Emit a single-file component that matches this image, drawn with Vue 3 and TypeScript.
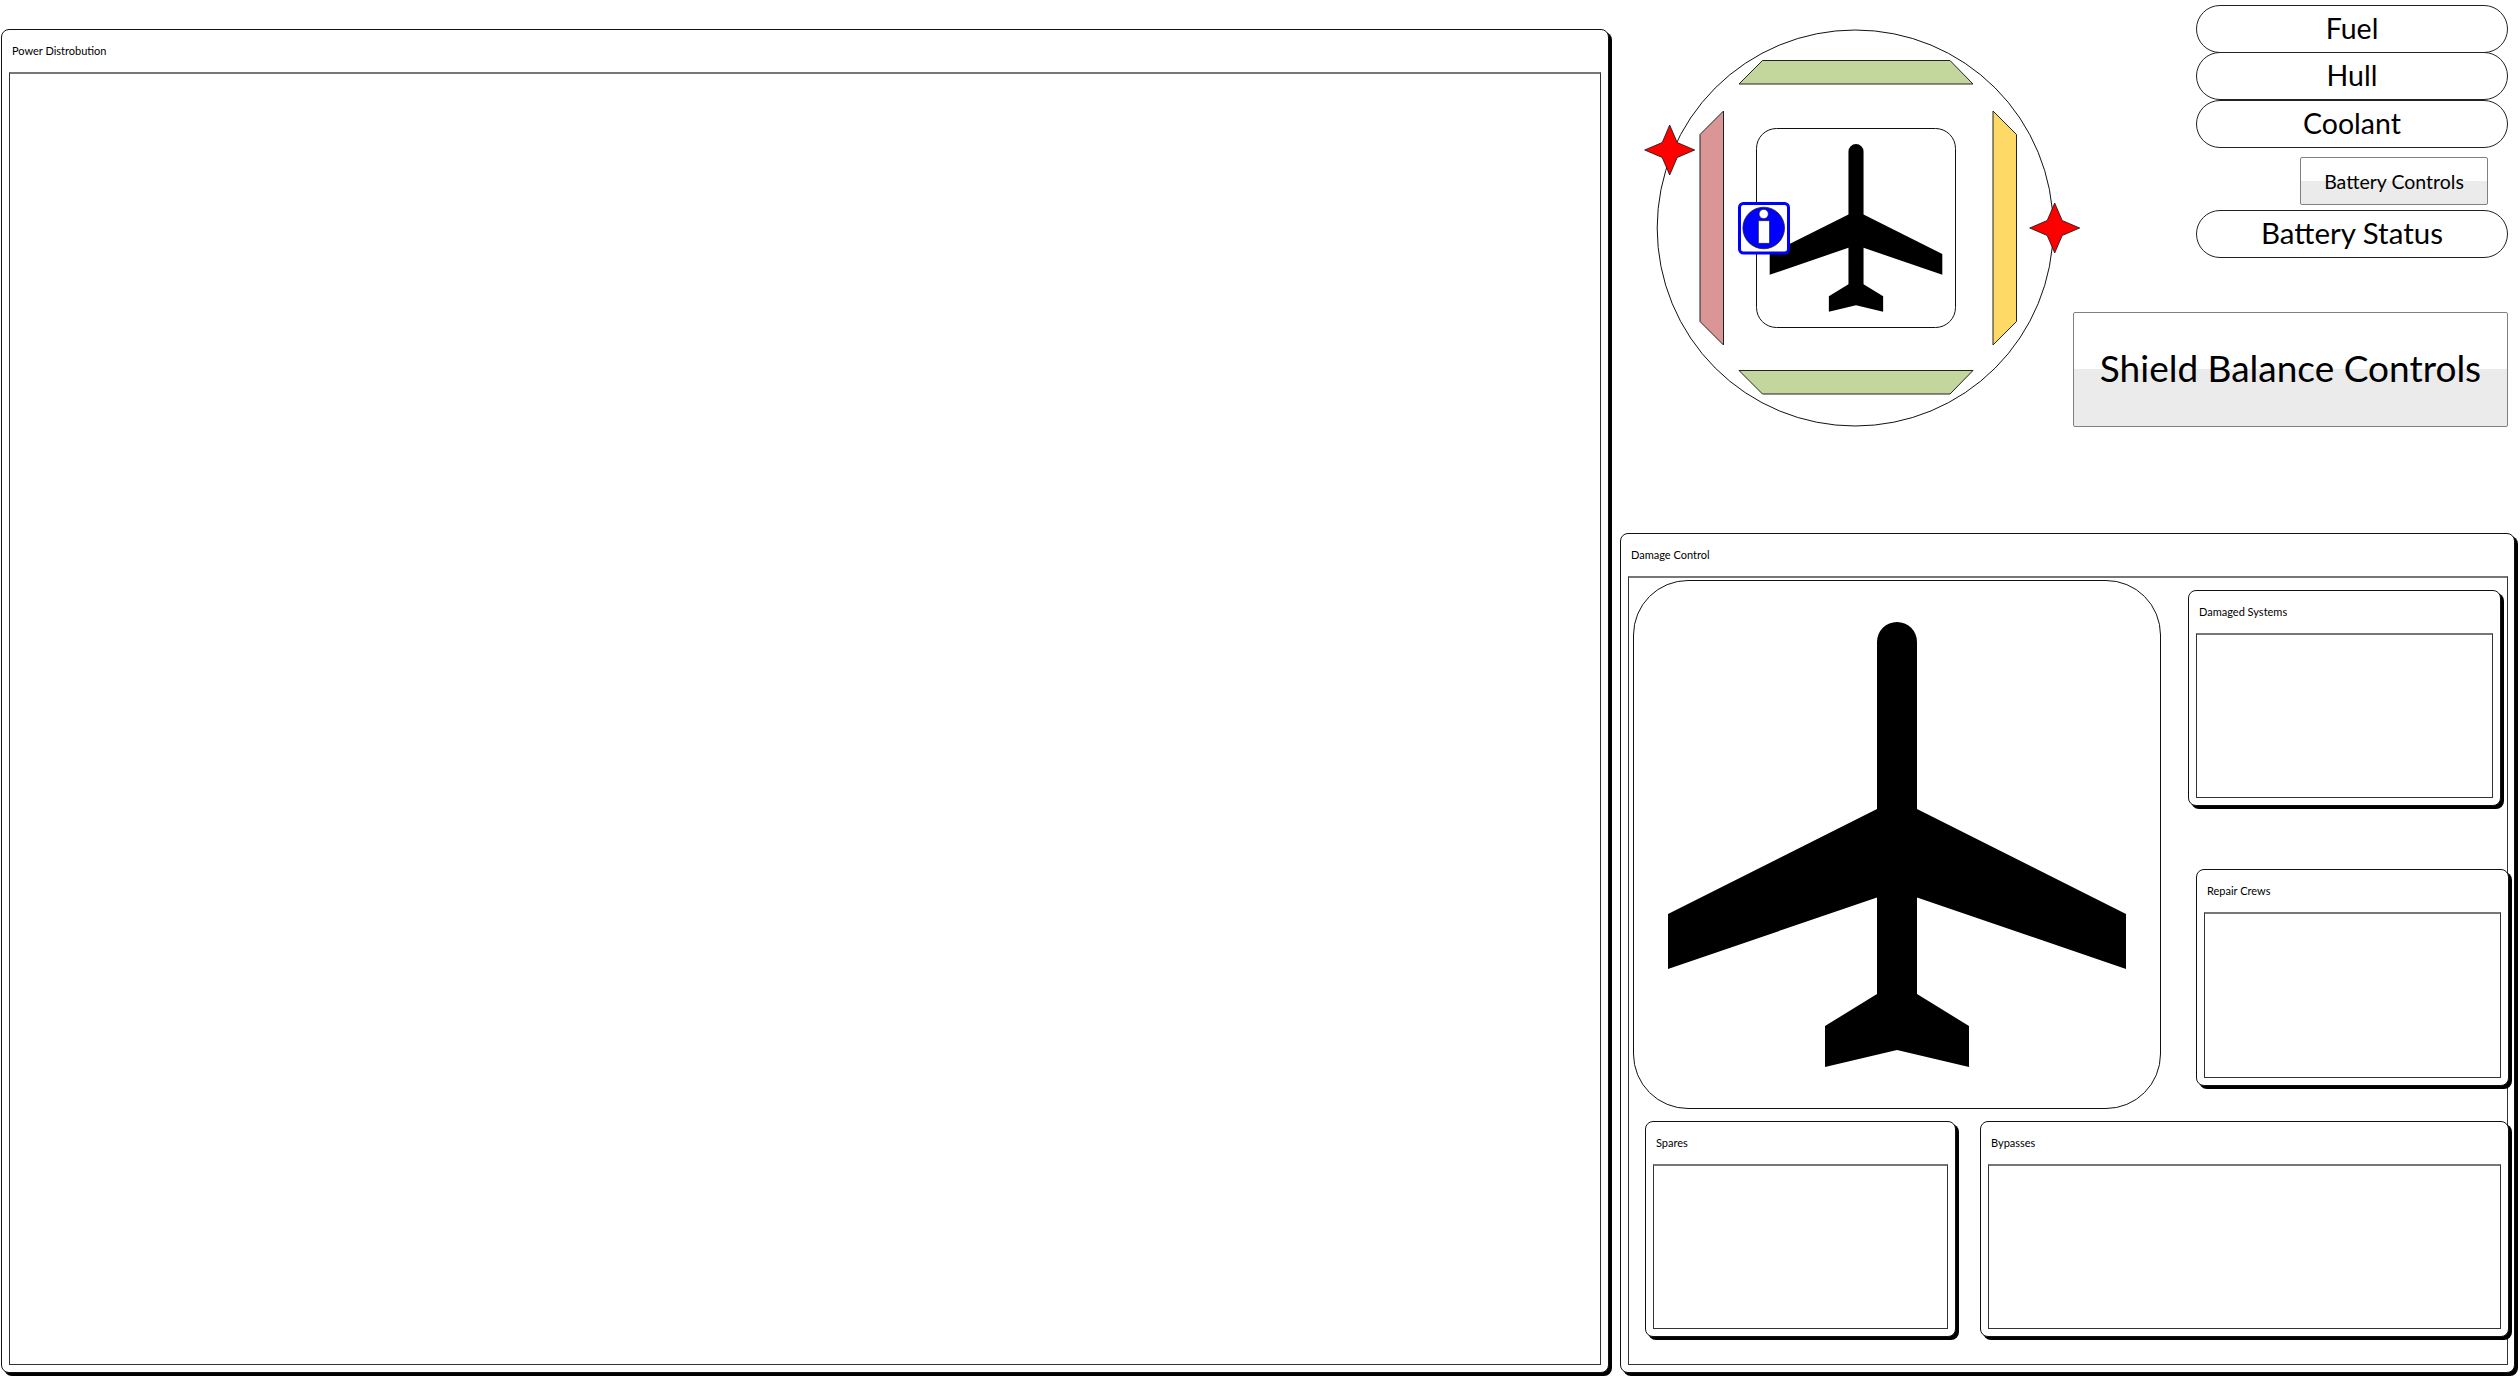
<script setup lang="ts">
const planePath =
    'M244 61 A20 20 0 0 1 284 61 V228 L493 333 V388 L284 316.5 V413 L336 445 V486 L264 469 L192 486 V445 L244 413 V316.5 L35 388 V333 L244 228 Z';

const starPoints = '0,-25 7.5,-7.5 25,0 7.5,7.5 0,25 -7.5,7.5 -25,0 -7.5,-7.5';

const shields = [
    { id: 'fore', points: '1762.5,60.5 1950,60.5 1973,84 1739,84', fill: '#c3d69b' },
    { id: 'aft', points: '1739,370.5 1973,370.5 1950,394 1762.5,394', fill: '#c3d69b' },
    { id: 'port', points: '1723.5,111 1723.5,345 1700,321.5 1700,134.5', fill: '#d99694' },
    { id: 'starboard', points: '1993,111 2016.5,134.5 2016.5,321.5 1993,345', fill: '#ffd966' },
];
</script>

<template>
    <div class="page">
        <section class="panel power">
            <div class="panel-title">Power Distrobution</div>
            <div class="panel-list" />
        </section>

        <div class="right-col">
            <div class="top-row">
                <svg class="ship-status" viewBox="1620 0 453 533">
                    <circle cx="1855.2" cy="228" r="198" fill="#fff" stroke="#111" />
                    <polygon
                        v-for="shield in shields"
                        :key="shield.id"
                        :points="shield.points"
                        :fill="shield.fill"
                        stroke="#222"
                    />
                    <rect x="1756.5" y="128.5" width="199" height="199" rx="20" fill="#fff" stroke="#111" />
                    <path :d="planePath" transform="translate(1756.5 128.5) scale(0.3769)" fill="#000" />

                    <polygon :points="starPoints" transform="translate(1669.7 150)" fill="#f00" stroke="#111" stroke-width="0.8" />
                    <polygon :points="starPoints" transform="translate(2054.7 228)" fill="#f00" stroke="#111" stroke-width="0.8" />

                    <rect x="1739.5" y="203.5" width="49" height="49.5" rx="4" fill="#fff" stroke="#00f" stroke-width="3" />
                    <circle cx="1763.7" cy="228" r="20.8" fill="#00f" stroke="#222" stroke-width="0.8" />
                    <circle cx="1763.7" cy="214" r="4.6" fill="#fff" stroke="#222" stroke-width="0.6" />
                    <rect x="1758.4" y="220.8" width="11" height="22.4" fill="#fff" stroke="#222" stroke-width="0.6" />
                </svg>

                <div class="controls">
                    <div class="pill">Fuel</div>
                    <div class="pill hull">Hull</div>
                    <div class="pill">Coolant</div>
                    <div class="button battery-controls">Battery Controls</div>
                    <div class="pill battery-status">Battery Status</div>
                    <div class="button shield-controls">Shield Balance Controls</div>
                </div>
            </div>

            <section class="panel damage">
                <div class="panel-title">Damage Control</div>
                <div class="panel-list damage-list">
                    <div class="damage-upper">
                        <div class="plane-box">
                            <svg class="plane-big" viewBox="0 0 528 528">
                                <path :d="planePath" fill="#000" />
                            </svg>
                        </div>
                        <div class="damage-side">
                            <section class="panel damaged-systems">
                                <div class="panel-title">Damaged Systems</div>
                                <div class="panel-list" />
                            </section>
                            <section class="panel repair-crews">
                                <div class="panel-title">Repair Crews</div>
                                <div class="panel-list" />
                            </section>
                        </div>
                    </div>
                    <div class="damage-lower">
                        <section class="panel spares">
                            <div class="panel-title">Spares</div>
                            <div class="panel-list" />
                        </section>
                        <section class="panel bypasses">
                            <div class="panel-title">Bypasses</div>
                            <div class="panel-list" />
                        </section>
                    </div>
                </div>
            </section>
        </div>
    </div>
</template>

<style>
html,
body {
    margin: 0;
    background: #fff;
}
</style>

<style scoped>
.page {
    display: flex;
    width: 2520px;
    height: 1377px;
    padding-left: 1px;
    box-sizing: border-box;
    overflow: hidden;
    font-family: Lato, "Open Sans", sans-serif;
    color: #000;
    background: #fff;
}

.panel {
    display: flex;
    flex-direction: column;
    box-sizing: border-box;
    padding: 0 7px 7px;
    background: #fff;
    border: 1px solid #111;
    border-radius: 8px;
    box-shadow: 3px 3px 0 #000;
}

.panel-title {
    flex: none;
    height: 42px;
    padding: 0 3px;
    font-size: 11px;
    line-height: 41px;
}

.panel-list {
    flex: 1;
    min-height: 0;
    box-sizing: border-box;
    background: #fff;
    border: 1px solid #333;
    border-top: 2px solid #777;
}

.power {
    flex: none;
    width: 1608px;
    height: 1344px;
    margin: 29px 11px 0 0;
}

.right-col {
    display: flex;
    flex: none;
    flex-direction: column;
    width: 895px;
}

.top-row {
    display: flex;
    flex: none;
    height: 533px;
}

.ship-status {
    flex: none;
    width: 453px;
    height: 533px;
    overflow: visible;
}

.controls {
    display: flex;
    flex: none;
    flex-direction: column;
    align-items: flex-end;
    width: 435px;
    padding-top: 5px;
    box-sizing: border-box;
}

.pill {
    flex: none;
    width: 312px;
    height: 48px;
    box-sizing: border-box;
    background: #fff;
    border: 1px solid #222;
    border-radius: 24px;
    font-size: 28.5px;
    line-height: 45px;
    text-align: center;
}

.pill.hull {
    margin-top: -1px;
}

.battery-status {
    margin-top: 5px;
    font-size: 29.5px;
    line-height: 44px;
}

.button {
    flex: none;
    box-sizing: border-box;
    display: flex;
    align-items: center;
    justify-content: center;
    background: linear-gradient(#fff 50%, #ebebeb 50%);
    border: 1px solid #808080;
    border-radius: 2px;
}

.battery-controls {
    width: 188px;
    height: 48px;
    margin: 9px 20px 0 0;
    padding-top: 1px;
    font-size: 19.5px;
}

.shield-controls {
    width: 435px;
    height: 115px;
    margin-top: 54px;
    padding-bottom: 5px;
    font-size: 37px;
}

.damage {
    flex: none;
    height: 840px;
    padding-right: 6px;
}

.damage-list {
    padding: 2px 0 0 4px;
}

.damage-upper {
    display: flex;
}

.plane-box {
    flex: none;
    width: 528px;
    height: 529px;
    box-sizing: border-box;
    background: #fff;
    border: 1px solid #111;
    border-radius: 55px;
}

.plane-big {
    display: block;
    width: 528px;
    height: 528px;
    margin: 0 -1px;
}

.damage-side {
    display: flex;
    flex: none;
    flex-direction: column;
    margin: 10px 0 0 27px;
}

.damaged-systems {
    width: 313px;
    height: 216px;
}

.repair-crews {
    width: 313px;
    height: 217px;
    margin: 63px 0 0 8px;
}

.damage-lower {
    display: flex;
    gap: 24px;
    margin-top: 12px;
    padding-left: 12px;
}

.spares {
    flex: none;
    width: 311px;
    height: 216px;
}

.bypasses {
    flex: none;
    width: 529px;
    height: 216px;
}
</style>
